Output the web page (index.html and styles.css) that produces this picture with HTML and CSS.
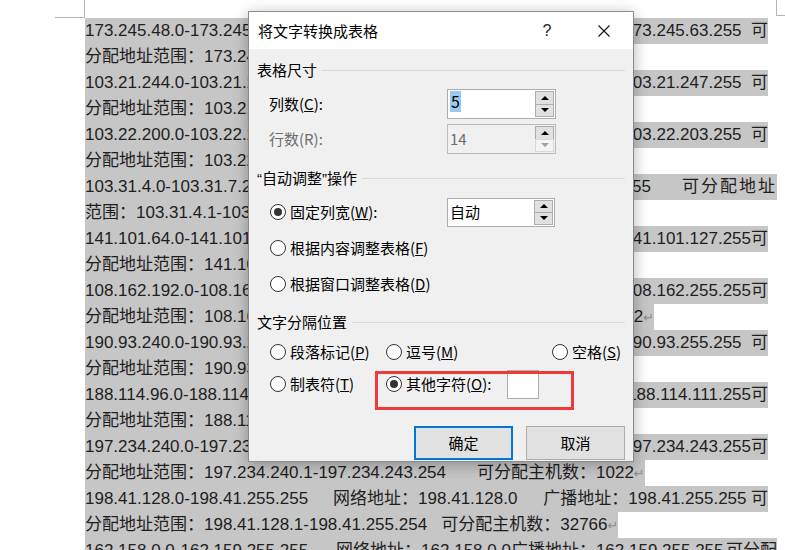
FILE: index.html
```html
<!DOCTYPE html>
<html>
<head>
<meta charset="utf-8">
<link rel="stylesheet" href="styles.css">
</head>
<body>
<div class="page">
  <div class="marks"><i class="mark-l"></i><i class="mark-r"></i></div>
  <div class="doc">
    <div class="ln full"><span>173.245.48.0-173.245.63.255</span><span>广播地址：173.245.63.255  可</span></div>
    <div class="ln under">分配地址范围：173.245.48.1-173.245.63.254  可分配主机数：4094</div>
    <div class="ln full"><span>103.21.244.0-103.21.247.255</span><span>广播地址：103.21.247.255  可</span></div>
    <div class="ln under">分配地址范围：103.21.244.1-103.21.247.254  可分配主机数：1022</div>
    <div class="ln full"><span>103.22.200.0-103.22.203.255</span><span>广播地址：103.22.203.255  可</span></div>
    <div class="ln under">分配地址范围：103.22.200.1-103.22.203.254  可分配主机数：1022</div>
    <div class="ln wide"><span>103.31.4.0-103.31.7.255</span><span>广播地址：103.31.7.255<span class="tab"></span><span class="spread">可分配地址</span></span></div>
    <div class="ln under">范围：103.31.4.1-103.31.7.254    可分配主机数：1022</div>
    <div class="ln full"><span>141.101.64.0-141.101.127.255</span><span>广播地址：141.101.127.255可</span></div>
    <div class="ln under">分配地址范围：141.101.64.1-141.101.127.254  可分配主机数：16382</div>
    <div class="ln full"><span>108.162.192.0-108.162.255.255</span><span>广播地址：108.162.255.255可</span></div>
    <div class="ln auto">分配地址范围：108.162.192.1-108.162.255.254<span class="tab"></span>可分配主机数：16382<span class="pm">↵</span></div>
    <div class="ln full"><span>190.93.240.0-190.93.255.255</span><span>广播地址：190.93.255.255  可</span></div>
    <div class="ln under">分配地址范围：190.93.240.1-190.93.255.254  可分配主机数：4094</div>
    <div class="ln full"><span>188.114.96.0-188.114.111.255</span><span>广播地址：188.114.111.255可</span></div>
    <div class="ln under">分配地址范围：188.114.96.1-188.114.111.254  可分配主机数：4094</div>
    <div class="ln full"><span>197.234.240.0-197.234.243.255</span><span>广播地址：197.234.243.255可</span></div>
    <div class="ln auto">分配地址范围：197.234.240.1-197.234.243.254<span class="tab"></span>可分配主机数：1022<span class="pm">↵</span></div>
    <div class="ln full"><span>198.41.128.0-198.41.255.255</span><span class="gap-a">网络地址：198.41.128.0</span><span class="gap-b">广播地址：198.41.255.255</span><span class="push">可</span></div>
    <div class="ln auto">分配地址范围：198.41.128.1-198.41.255.254   可分配主机数：32766<span class="pm">↵</span></div>
    <div class="ln wide"><span>162.158.0.0-162.159.255.255</span><span class="gap-c">网络地址：162.158.0.0广播地址：162.159.255.255</span><span class="push">可分配</span></div>
  </div>

  <div class="dialog">
    <div class="titlebar">
      <span class="title">将文字转换成表格</span>
      <span class="tb-btn help">?</span>
      <span class="tb-btn close"><svg width="12" height="12" viewBox="0 0 12 12"><path d="M0.5 0.5L11.5 11.5M11.5 0.5L0.5 11.5" stroke="#111" stroke-width="1.1" fill="none"/></svg></span>
    </div>
    <div class="dbody">
      <div class="ghead"><span>表格尺寸</span><i></i></div>
      <div class="frow size first">
        <span>列数(<u>C</u>):</span>
        <div class="spin"><span class="val top"><span class="sel">5</span></span><span class="arrows"><b class="up"></b><b class="down"></b></span></div>
      </div>
      <div class="frow size dis">
        <span>行数(R):</span>
        <div class="spin disabled"><span class="val">14</span><span class="arrows"><b class="up"></b><b class="down off"></b></span></div>
      </div>
      <div class="ghead g2"><span><span class="q">“</span>自动调整<span class="q">”</span>操作</span><i></i></div>
      <div class="frow fitrow first">
        <label class="radio on"><i></i><span>固定列宽(<u>W</u>):</span></label>
        <div class="spin short"><span class="val">自动</span><span class="arrows"><b class="up"></b><b class="down"></b></span></div>
      </div>
      <div class="frow fitrow"><label class="radio"><i></i><span>根据内容调整表格(<u>F</u>)</span></label></div>
      <div class="frow fitrow"><label class="radio"><i></i><span>根据窗口调整表格(<u>D</u>)</span></label></div>
      <div class="ghead g3"><span>文字分隔位置</span><i></i></div>
      <div class="sepgrid">
        <label class="radio"><i></i><span>段落标记(<u>P</u>)</span></label>
        <label class="radio"><i></i><span>逗号(<u>M</u>)</span></label>
        <label class="radio"><i></i><span>空格(<u>S</u>)</span></label>
        <label class="radio"><i></i><span>制表符(<u>T</u>)</span></label>
        <label class="radio on"><i></i><span>其他字符(<u>O</u>):</span><span class="charbox"></span></label>
      </div>
      <div class="buttons"><span class="btn def">确定</span><span class="btn">取消</span></div>
    </div>
    <div class="redbox"></div>
  </div>
</div>
</body>
</html>
```

FILE: styles.css
```css
body {
  margin: 0;
  background: #fff;
}

.page {
  position: relative;
  width: 785px;
  height: 550px;
  overflow: hidden;
  font-family: "Liberation Sans", "Noto Sans CJK SC", sans-serif;
}

/* page corner marks */
.marks {
  display: flex;
  height: 18px;
}
.mark-l {
  display: block;
  width: 31px;
  height: 18px;
  margin-left: 55px;
  box-sizing: border-box;
  border-right: 1px solid #b4b4b4;
  border-bottom: 1px solid #b4b4b4;
}
.mark-r {
  display: block;
  width: 9px;
  height: 16px;
  margin-left: 691px;
  box-sizing: border-box;
  border-left: 1px solid #b4b4b4;
  border-bottom: 1px solid #b4b4b4;
}

/* document lines */
.doc {
  margin-left: 85px;
}
.ln {
  height: 26px;
  line-height: 26px;
  font-size: 17px;
  white-space: pre;
  color: #1e1e1e;
  background: #c6c6c6;
  overflow: hidden;
}
.full {
  display: flex;
  justify-content: space-between;
  width: 683px;
}
.wide {
  display: flex;
  justify-content: space-between;
  width: 692px;
}
.under {
  width: 450px;
}
.auto {
  width: fit-content;
}
.tab {
  display: inline-block;
  width: 31px;
}
.pm {
  color: #8c8c8c;
  font-size: 13px;
  font-family: "DejaVu Sans", sans-serif;
}
.spread {
  letter-spacing: 2px;
}
.gap-a { margin-left: 25px; }
.gap-b { margin-left: 26px; }
.gap-c { margin-left: 28px; }
.push { margin-left: auto; }

/* dialog */
.dialog {
  position: absolute;
  left: 248px;
  top: 11px;
  width: 386px;
  height: 451px;
  box-sizing: border-box;
  border: 1px solid #8c8c8c;
  background: #f0f0f0;
  box-shadow: 0 3px 14px rgba(0, 0, 0, 0.3);
  font-family: "Noto Sans CJK SC", "Liberation Sans", sans-serif;
  font-size: 15px;
  line-height: 20px;
  color: #000;
}
.titlebar {
  display: flex;
  align-items: center;
  height: 37px;
  background: #fff;
  padding: 0 6px 0 9px;
}
.title {
  flex: 1;
}
.tb-btn {
  display: flex;
  align-items: center;
  justify-content: center;
  height: 37px;
}
.help {
  width: 30px;
  font-family: "Liberation Sans", sans-serif;
  font-size: 16px;
  color: #222;
}
.close {
  width: 46px;
  margin-left: 19px;
}

.dbody {
  padding: 11px 8px 0;
}
.ghead {
  display: flex;
  align-items: center;
  height: 20px;
}
.ghead i {
  flex: 1;
  height: 1px;
  background: #dadada;
  margin-left: 5px;
}
.g2 { margin-top: 14px; }
.g3 { margin-top: 10px; }
.q {
  font-family: "Liberation Sans", sans-serif;
}

.frow {
  display: grid;
  align-items: center;
}
.size {
  grid-template-columns: 178px 109px;
  padding-left: 12px;
  height: 30px;
  margin-top: 5px;
}
.size.first { margin-top: 9px; }
.dis { color: #6d6d6d; }
.fitrow {
  grid-template-columns: 177px 108px;
  padding-left: 13px;
  height: 36px;
}
.fitrow.first { margin-top: 6px; }

/* spin boxes */
.spin {
  display: flex;
  height: 30px;
  box-sizing: border-box;
  border: 1px solid #adadad;
  background: #fff;
}
.spin.short { height: 29px; }
.spin.disabled {
  background: #f0f0f0;
  border-color: #bcbcbc;
}
.val {
  flex: 1;
  display: flex;
  align-items: center;
  padding-left: 2px;
}
.val.top {
  align-items: flex-start;
  padding-top: 1px;
}
.sel {
  background: #99c9ef;
  line-height: 21px;
  font-size: 16px;
  padding: 0 1px;
}
.arrows {
  display: flex;
  flex-direction: column;
  width: 19px;
  margin: 1px 1px 1px 0;
}
.arrows b {
  flex: 1;
  display: flex;
  align-items: center;
  justify-content: center;
  border: 1px solid #adadad;
  background: #e1e1e1;
}
.arrows b + b { margin-top: -1px; }
.arrows b::before {
  content: "";
  border-left: 4px solid transparent;
  border-right: 4px solid transparent;
}
.arrows .up::before { border-bottom: 4px solid #000; }
.arrows .down::before { border-top: 4px solid #000; }
.arrows .off {
  background: #f4f4f4;
  border-color: #d9d9d9;
}
.arrows .off::before { border-top-color: #a0a0a0; }

/* radios */
.radio {
  display: flex;
  align-items: center;
  gap: 4px;
  white-space: nowrap;
}
.radio i {
  position: relative;
  flex: none;
  width: 16px;
  height: 16px;
  box-sizing: border-box;
  border: 1px solid #333;
  border-radius: 50%;
  background: #fff;
}
.radio.on i::after {
  content: "";
  position: absolute;
  inset: 3px;
  border-radius: 50%;
  background: #333;
}

.sepgrid {
  display: grid;
  grid-template-columns: 116px 166px auto;
  grid-auto-rows: 32px;
  align-items: center;
  padding-left: 13px;
  margin-top: 4px;
}
.charbox {
  flex: none;
  width: 32px;
  height: 29px;
  box-sizing: border-box;
  border: 1px solid #adadad;
  background: #fff;
  margin-left: 12px;
}

/* buttons */
.buttons {
  display: flex;
  justify-content: flex-end;
  gap: 13px;
  margin-top: 26px;
}
.btn {
  display: flex;
  align-items: center;
  justify-content: center;
  width: 99px;
  height: 34px;
  box-sizing: border-box;
  border: 1px solid #adadad;
  background: #e1e1e1;
}
.btn.def {
  border: 2px solid #0078d7;
}

/* annotation box */
.redbox {
  position: absolute;
  left: 126px;
  top: 359px;
  width: 199px;
  height: 39px;
  box-sizing: border-box;
  border: 3px solid #f03a3a;
}
```
